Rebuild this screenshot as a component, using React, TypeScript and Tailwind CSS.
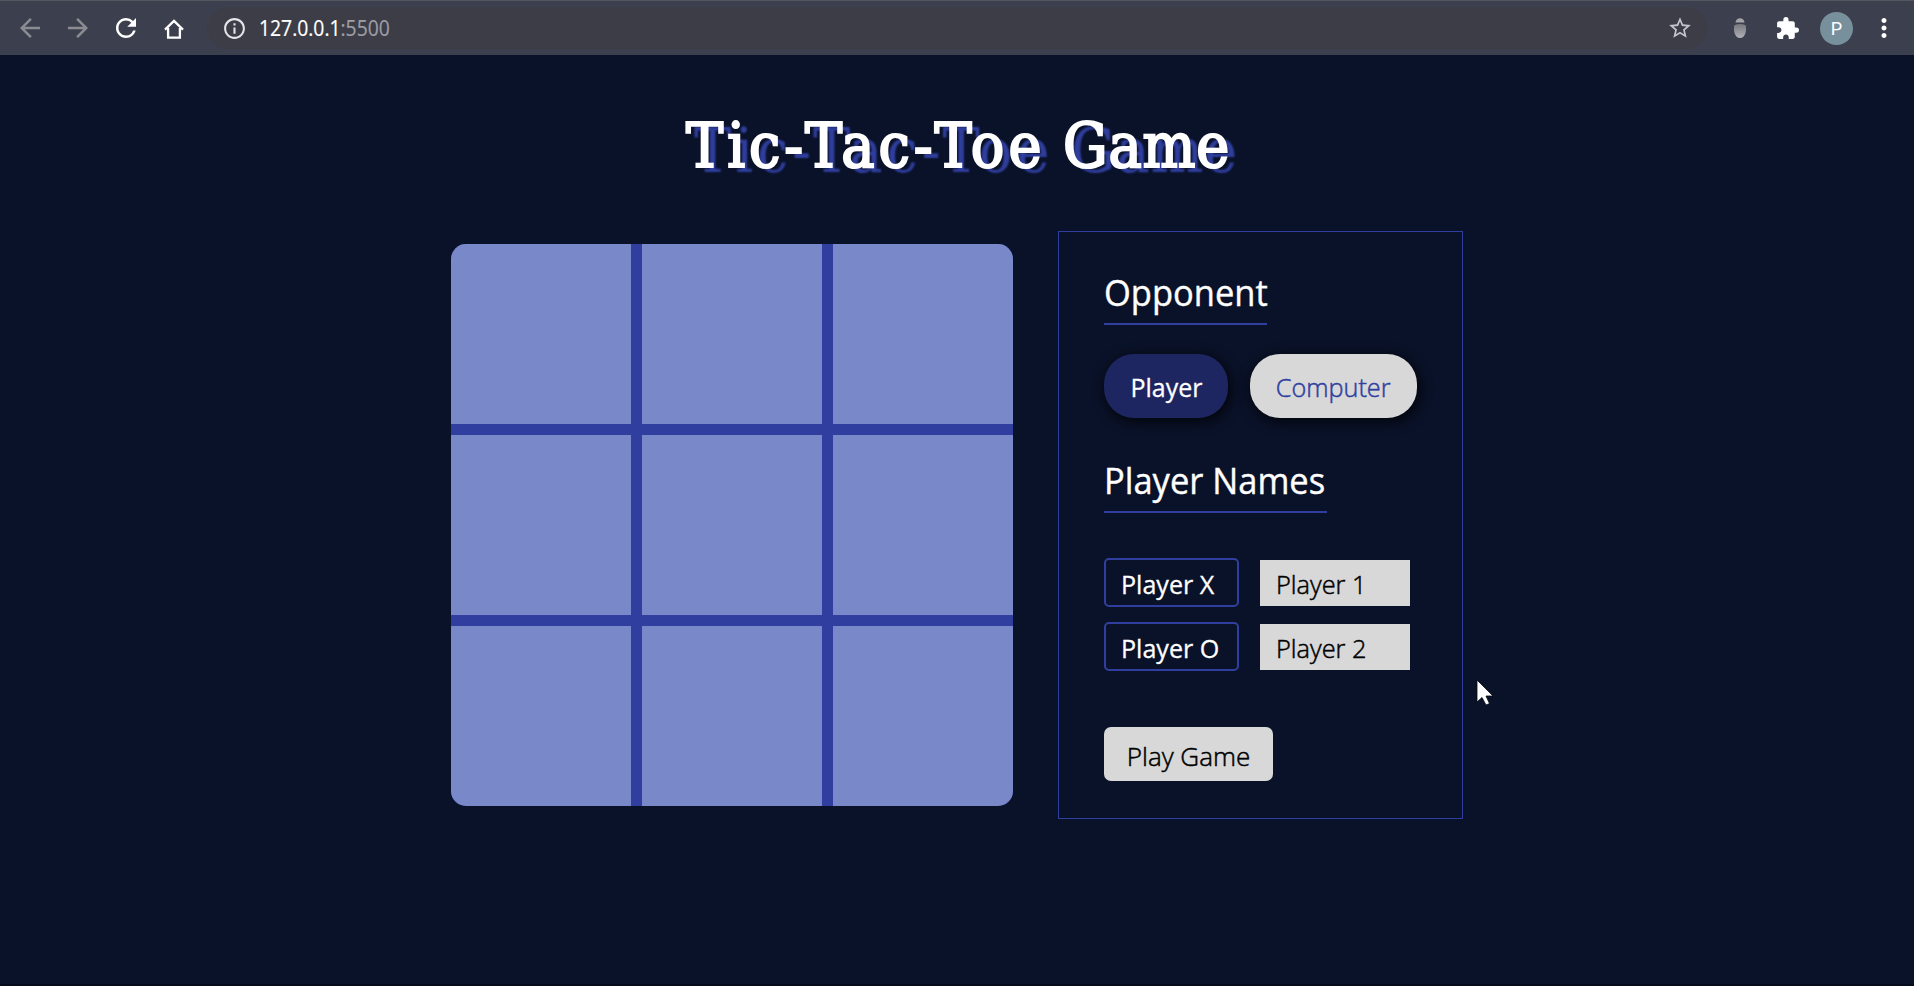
import React from "react";
import {
  MdArrowBack,
  MdArrowForward,
  MdRefresh,
  MdInfoOutline,
  MdStarBorder,
  MdExtension,
  MdMoreVert,
} from "react-icons/md";

function HomeIcon() {
  return (
    <svg viewBox="0 0 20 20" className="size-5" fill="none" stroke="currentColor" strokeWidth="2.3">
      <path d="M1 10.6 10 1.9l9 8.7M4.1 9v9.6h11.8V9" />
    </svg>
  );
}

function BugIcon() {
  return (
    <svg viewBox="0 0 20 22" className="h-[22px] w-5">
      <defs>
        <linearGradient id="bug" x1="0" y1="0" x2="0" y2="1">
          <stop offset="0" stopColor="#77777e" />
          <stop offset="1" stopColor="#b0b0b6" />
        </linearGradient>
      </defs>
      <path d="M5.5 5.600C5.700 3 7.500 1.200 10 1.200s4.300 1.800 4.500 4.400Z" fill="#a3a3a9" />
      <path d="M4.300 8.200Q10 5.800 15.700 8.200C16.800 13 15.500 21 10 21S3.200 13 4.300 8.200Z" fill="url(#bug)" />
    </svg>
  );
}

function Toolbar() {
  return (
    <header className="flex h-[55px] items-center border-t border-[#53565f] bg-[#3c404e] pl-[15px] pr-[15px] text-white">
      <MdArrowBack className="size-[30px] text-[#8b8c92]" />
      <MdArrowForward className="ml-[18px] size-[30px] text-[#8b8c92]" />
      <MdRefresh className="ml-[18px] size-[30px]" />
      <div className="ml-[23px] mt-px">
        <HomeIcon />
      </div>
      <div className="ml-[23px] flex h-[42px] w-[1500px] items-center rounded-full bg-[#3c3d46] pl-[15px] pr-[14px]">
        <MdInfoOutline className="size-[25px] text-[#e4e5e9]" />
        <p className="ml-[12px] origin-left scale-x-[0.92] font-['Open_Sans',sans-serif] text-[21px] leading-6 [-webkit-text-stroke:0.2px_currentColor]">
          127.0.0.1<span className="text-[#9c9da5]">:5500</span>
        </p>
        <MdStarBorder className="ml-auto size-[26px] text-[#c3c4ca]" />
      </div>
      <div className="ml-[23px]">
        <BugIcon />
      </div>
      <MdExtension className="ml-[25px] size-[25px]" />
      <div className="ml-[20px] grid size-[33px] place-items-center rounded-full bg-[#78909c] font-[Roboto,sans-serif] text-[18px]">
        P
      </div>
      <MdMoreVert className="ml-[16px] size-[30px]" />
    </header>
  );
}

function Board() {
  return (
    <div className="grid size-[562px] grid-cols-3 gap-[11px] overflow-hidden rounded-[15px] bg-[#303f9f]">
      {Array.from({ length: 9 }, (_, i) => (
        <div key={i} className="bg-[#7888c9]" />
      ))}
    </div>
  );
}

function PlayerRow({ label, name }: { label: string; name: string }) {
  return (
    <div className="flex h-[49px] items-center">
      <div className="h-[49px] w-[135px] rounded-[5px] border-2 border-[#303f9f] pl-[15px] pt-[4px] text-[26px] leading-[40px] text-white">
        <span className="inline-block origin-left scale-x-[0.965] [-webkit-text-stroke:0.3px_currentColor]">
          {label}
        </span>
      </div>
      <div className="ml-[21px] h-[46px] w-[150px] bg-[#d8d8d8] pl-[16px] pt-[4px] text-[26px] font-light leading-[40px] text-black">
        <span className="inline-block origin-left scale-x-[0.975] [-webkit-text-stroke:0.5px_currentColor]">
          {name}
        </span>
      </div>
    </div>
  );
}

function SectionTitle({ children }: { children: React.ReactNode }) {
  return (
    <span className="inline-block origin-left scale-x-[0.958] whitespace-nowrap [-webkit-text-stroke:0.4px_currentColor]">
      {children}
    </span>
  );
}

function Settings() {
  return (
    <section className="flex h-[588px] w-[405px] flex-col items-start border border-[#303f9f] pl-[45px] font-['Open_Sans',sans-serif] text-white">
      <h2 className="mt-[37px] h-[56px] w-[163px] border-b-2 border-[#303f9f] text-[36px] leading-[48px]">
        <SectionTitle>Opponent</SectionTitle>
      </h2>
      <div className="mt-[29px] flex gap-[22px] text-[26px] leading-[66px]">
        <button className="h-16 w-[124px] rounded-[30px] bg-[#1d2660] shadow-[2px_3px_12px_2px_rgba(0,0,0,0.65)]">
          <span className="inline-block scale-x-[0.96] [-webkit-text-stroke:0.3px_currentColor]">Player</span>
        </button>
        <button className="h-16 w-[167px] rounded-[30px] bg-[#d8d8d8] font-light text-[#303f9f] shadow-[2px_3px_12px_2px_rgba(0,0,0,0.65)]">
          <span className="inline-block scale-x-[0.97] [-webkit-text-stroke:0.5px_currentColor]">Computer</span>
        </button>
      </div>
      <h2 className="mt-[39px] h-[56px] w-[223px] border-b-2 border-[#303f9f] text-[36px] leading-[48px]">
        <SectionTitle>Player Names</SectionTitle>
      </h2>
      <div className="mt-[45px] flex flex-col gap-[15px]">
        <PlayerRow label="Player X" name="Player 1" />
        <PlayerRow label="Player O" name="Player 2" />
      </div>
      <button className="mt-[56px] h-[54px] w-[169px] rounded-[7px] bg-[#d8d8d8] text-[26px] font-light leading-[58px] text-black [-webkit-text-stroke:0.5px_currentColor]">
        Play Game
      </button>
    </section>
  );
}

function Cursor() {
  return (
    <svg viewBox="0 0 18 27" className="absolute left-[1476px] top-[679px] h-[27px] w-[18px]">
      <path
        d="M1 1v22l5-4.500 4 7.500 3.500-1.500-3.500-7.500h7Z"
        fill="#fff"
        stroke="#05070f"
        strokeWidth="0.8"
      />
    </svg>
  );
}

export default function App() {
  return (
    <div className="relative flex h-[986px] w-[1914px] flex-col overflow-hidden border-b-2 border-[#060b1d] bg-[#0a1229]">
      <Toolbar />
      <h1 className="mt-[50px] h-[76px] whitespace-nowrap pl-[2px] text-center font-['DejaVu_Serif_Condensed','DejaVu_Serif',serif] text-[62px] leading-[81px] text-white [text-shadow:8px_5px_2px_#303f9f] [-webkit-text-stroke:2.2px_#fff]">
        <span className="tracking-[4px]">Tic-Tac-Toe</span> <span className="tracking-[0.8px]">Game</span>
      </h1>
      <main className="mt-[50px] flex items-center justify-center gap-[45px]">
        <Board />
        <Settings />
      </main>
      <Cursor />
    </div>
  );
}
